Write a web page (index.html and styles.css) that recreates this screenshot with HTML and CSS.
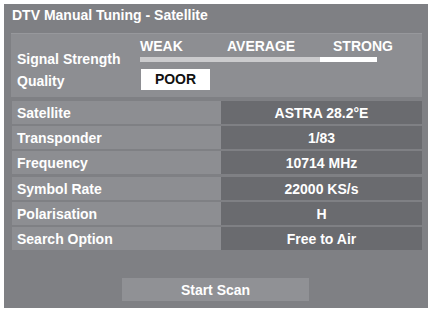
FILE: index.html
```html
<!DOCTYPE html>
<html lang="en">
<head>
    <meta charset="UTF-8">
    <meta name="viewport" content="width=device-width, initial-scale=1.0">
    <title>DTV Manual Tuning - Satellite</title>
    <link rel="stylesheet" href="styles.css">
</head>
<body>
    <div class="panel">
        <div class="title">DTV Manual Tuning - Satellite</div>

        <!-- Signal meter -->
        <div class="signal">
            <div class="signal-label">Signal Strength</div>
            <div class="levels">
                <div class="level-names">
                    <span class="weak">WEAK</span>
                    <span class="average">AVERAGE</span>
                    <span class="strong">STRONG</span>
                </div>
                <div class="bar">
                    <div class="bar-fill"></div>
                    <div class="bar-peak"></div>
                </div>
            </div>
            <div class="quality-label">Quality</div>
            <div class="quality-value">POOR</div>
        </div>

        <!-- Tuning parameters -->
        <div class="params">
            <div class="param-name">Satellite</div>
            <div class="param-value">ASTRA 28.2°E</div>
            <div class="param-name">Transponder</div>
            <div class="param-value">1/83</div>
            <div class="param-name">Frequency</div>
            <div class="param-value">10714 MHz</div>
            <div class="param-name">Symbol Rate</div>
            <div class="param-value">22000 KS/s</div>
            <div class="param-name">Polarisation</div>
            <div class="param-value">H</div>
            <div class="param-name">Search Option</div>
            <div class="param-value">Free to Air</div>
        </div>

        <div class="actions">
            <button class="scan-button">Start Scan</button>
        </div>
    </div>
</body>
</html>
```

FILE: styles.css
```css
/* General styles */
body {
    margin: 0;
    background: #fff;
    font-family: "Liberation Sans", Arial, sans-serif;
    font-weight: bold;
    font-size: 14px;
    color: #fff;
}

.panel {
    margin: 4px 1px 0 4px;
    height: 304px;
    background-color: #7f8084;
    padding: 0 6px 0 7px;
    box-sizing: border-box;
}

.title {
    padding: 2px 0 0 1px;
    line-height: 18px;
    margin-bottom: 9px;
}

/* Signal meter */
.signal {
    display: grid;
    grid-template-columns: 123px 1fr;
    padding: 0 0 7px 6px;
    background-color: #8d8e92;
    border-top: 1px solid #97989c;
    height: 64px;
    box-sizing: border-box;
}

.signal-label {
    padding-top: 17px;
    line-height: 16px;
}

.levels {
    padding-top: 4px;
}

.level-names {
    display: flex;
    line-height: 16px;
}

.level-names .weak {
    width: 87px;
}

.level-names .average {
    width: 106px;
}

.bar {
    display: flex;
    margin-top: 3px;
    height: 5px;
}

.bar-fill {
    width: 180px;
    background-color: #cbcbcd;
}

.bar-peak {
    width: 57px;
    background-color: #fff;
}

.quality-label {
    margin-top: 2px;
    align-self: center;
    line-height: 16px;
    padding-top: 3px;
}

.quality-value {
    margin: 2px 0 0 1px;
    width: 69px;
    height: 21px;
    line-height: 20px;
    background-color: #fff;
    color: #111;
    text-align: center;
}

/* Parameters table */
.params {
    display: grid;
    grid-template-columns: 209px 1fr;
    grid-auto-rows: 23px;
    row-gap: 2.2px;
    margin: 4px 0 0 1px;
}

.param-name,
.param-value {
    line-height: 23px;
    padding-top: 1px;
    box-sizing: border-box;
}

.param-name {
    padding-left: 5px;
    background-color: #8d8e92;
}

.param-value {
    background-color: #6a6b6f;
    text-align: center;
}

/* Scan button */
.actions {
    display: flex;
    justify-content: center;
    margin-top: 28px;
    padding-right: 2px;
}

.scan-button {
    width: 187px;
    height: 23px;
    border: none;
    background-color: #909195;
    color: #fff;
    font-family: inherit;
    font-weight: bold;
    font-size: 14px;
    padding: 1px 0 0;
}
```
